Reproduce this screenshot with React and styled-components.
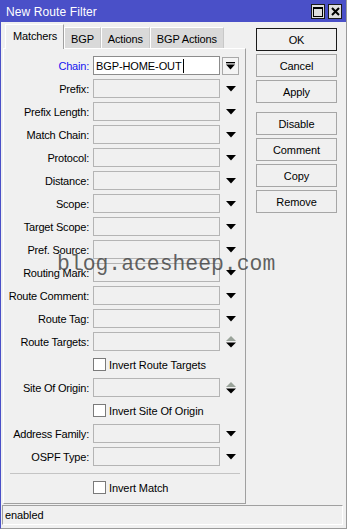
import React from "react";
import styled, { createGlobalStyle } from "styled-components";

const Global = createGlobalStyle`
  html, body { margin: 0; padding: 0; background: #f0f0f0; }
  body { font-family: "Liberation Sans", Arial, sans-serif; font-size: 11px; color: #000; }
  * { box-sizing: border-box; }
`;

const Window = styled.div`
  position: relative;
  width: 347px;
  height: 529px;
  background: #f0f0f0;
  border-left: 1px solid #4a50c8;
  border-right: 1px solid #9a9a9a;
  border-bottom: 1px solid #9a9a9a;
  display: flex;
  flex-direction: column;
  overflow: hidden;
`;

const TitleBar = styled.div`
  height: 22px;
  margin-left: -1px;
  margin-right: -1px;
  background: #4a50c8;
  display: flex;
  align-items: center;
  justify-content: space-between;
  padding: 0 5px 0 6px;
`;

const Title = styled.div`
  color: #fff;
  font-size: 12px;
  letter-spacing: 0.1px;
  padding-top: 1px;
`;

const TitleButtons = styled.div`
  display: flex;
  gap: 3px;
  margin-top: 1px;
`;

const TitleBtn = styled.div`
  width: 14px;
  height: 15px;
  background: #dedede;
  border: 1px solid #1a1a1a;
  display: flex;
  align-items: center;
  justify-content: center;
`;

const Main = styled.div`
  display: flex;
  padding: 2px 0 0 2px;
  height: 482px;
`;

const LeftCol = styled.div`
  width: 243px;
  display: flex;
  flex-direction: column;
`;

const Tabs = styled.div`
  display: flex;
  height: 24px;
  padding-left: 2px;
  position: relative;
  z-index: 2;
`;

const Tab = styled.div`
  height: ${(p) => (p.$active ? "25px" : "21px")};
  margin-top: ${(p) => (p.$active ? "0" : "3px")};
  padding: ${(p) => (p.$active ? "0 6px 2px 7px" : "1px 6px 0")};
  background: ${(p) => (p.$active ? "#f0f0f0" : "#d9d9d9")};
  border-top: 1px solid #fff;
  border-left: 1px solid #fff;
  border-right: 1px solid ${(p) => (p.$active ? "#a0a0a0" : "#c8c8c8")};
  display: flex;
  align-items: center;
  justify-content: center;
  letter-spacing: -0.15px;
`;

const Panel = styled.div`
  height: 456px;
  border-top: 1px solid #fff;
  border-left: 1px solid #fff;
  border-right: 1px solid #a0a0a0;
  border-bottom: 1px solid #a0a0a0;
  padding: 7px 0 0 0;
  display: flex;
  flex-direction: column;
`;

const Form = styled.div`
  display: flex;
  flex-direction: column;
  gap: 4px;
`;

const Row = styled.div`
  display: flex;
  align-items: center;
  height: 19px;
`;

const Label = styled.div`
  width: 86px;
  padding-right: 1px;
  text-align: right;
  white-space: nowrap;
  letter-spacing: -0.2px;
  color: ${(p) => (p.$blue ? "#1515f0" : "#000")};
`;

const Field = styled.div`
  width: 127px;
  height: 19px;
  margin-left: 3px;
  border: 1px solid ${(p) => (p.$active ? "#8c8c8c" : "#b4b4b4")};
  background: ${(p) => (p.$active ? "#fff" : "#f0f0f0")};
  display: flex;
  align-items: center;
  padding-left: 2px;
  letter-spacing: -0.1px;
`;

const Caret = styled.span`
  display: inline-block;
  width: 1px;
  height: 14px;
  background: #000;
  margin-left: 1px;
`;

const ArrowSlot = styled.div`
  width: 17px;
  height: 18px;
  margin-left: 2px;
  display: flex;
  align-items: center;
  justify-content: center;
`;

const DropBtn = styled.div`
  width: 17px;
  height: 18px;
  margin-left: 2px;
  border: 1px solid #a8a8a8;
  background: #f4f4f4;
  display: flex;
  align-items: center;
  justify-content: center;
`;

const CheckBox = styled.div`
  width: 13px;
  height: 13px;
  margin-left: 3px;
  background: #fff;
  border: 1px solid #7a7a7a;
`;

const CheckLabel = styled.div`
  margin-left: 3px;
  letter-spacing: -0.1px;
`;

const Separator = styled.div`
  height: 1px;
  background: #c4c4c4;
  margin: 7px 5px 4px 6px;
`;

const ButtonCol = styled.div`
  margin-left: 10px;
  padding-top: 4px;
  display: flex;
  flex-direction: column;
  width: 81px;
`;

const ButtonGroup = styled.div`
  display: flex;
  flex-direction: column;
  gap: 3px;
  margin-bottom: ${(p) => (p.$spaced ? "9px" : "0")};
`;

const Button = styled.div`
  height: 23px;
  border: 1px solid ${(p) => (p.$default ? "#1a1a1a" : "#a6a6a6")};
  background: #f0f0f0;
  display: flex;
  align-items: center;
  justify-content: center;
  letter-spacing: -0.1px;
`;

const StatusBar = styled.div`
  margin: 1px 3px 0 1px;
  height: 20px;
  border-top: 1px solid #a0a0a0;
  border-left: 1px solid #a0a0a0;
  border-bottom: 1px solid #fff;
  border-right: 1px solid #fff;
  display: flex;
  align-items: center;
  padding-left: 2px;
  letter-spacing: -0.1px;
`;

const Watermark = styled.div`
  position: absolute;
  left: 56px;
  top: 254px;
  font-family: "Liberation Mono", "DejaVu Sans Mono", monospace;
  font-size: 21.4px;
  line-height: 21px;
  color: rgba(70, 70, 70, 0.85);
  pointer-events: none;
  white-space: nowrap;
`;

const Down = () => (
  <svg width="10" height="6" viewBox="0 0 10 6">
    <polygon points="0,0 10,0 5,5.5" fill="#000" />
  </svg>
);

const Spin = () => (
  <svg width="10" height="12" viewBox="0 0 10 12">
    <polygon points="5,0 10,5 0,5" fill="#9aa39a" />
    <polygon points="0,6.5 10,6.5 5,11.5" fill="#000" />
  </svg>
);

const DropIcon = () => (
  <svg width="9" height="8" viewBox="0 0 9 8">
    <rect x="0" y="0" width="9" height="1.3" fill="#000" />
    <polygon points="0,2.5 9,2.5 4.5,7.5" fill="#000" />
  </svg>
);

const fields = [
  ["Prefix", "down"],
  ["Prefix Length", "down"],
  ["Match Chain", "down"],
  ["Protocol", "down"],
  ["Distance", "down"],
  ["Scope", "down"],
  ["Target Scope", "down"],
  ["Pref. Source", "down"],
  ["Routing Mark", "down"],
  ["Route Comment", "down"],
  ["Route Tag", "down"],
  ["Route Targets", "spin"],
  ["Invert Route Targets", "check"],
  ["Site Of Origin", "spin"],
  ["Invert Site Of Origin", "check"],
  ["Address Family", "down"],
  ["OSPF Type", "down"],
];

const CheckRow = ({ label }) => (
  <Row>
    <Label />
    <CheckBox />
    <CheckLabel>{label}</CheckLabel>
  </Row>
);

export default function App() {
  return (
    <>
      <Global />
      <Window>
        <TitleBar>
          <Title>New Route Filter</Title>
          <TitleButtons>
            <TitleBtn>
              <svg width="10" height="10" viewBox="0 0 10 10">
                <rect x="0.5" y="0.5" width="9" height="9" fill="none" stroke="#000" strokeWidth="1" />
                <rect x="0" y="0" width="10" height="2" fill="#000" />
              </svg>
            </TitleBtn>
            <TitleBtn>
              <svg width="9" height="9" viewBox="0 0 9 9">
                <path d="M1 1 L8 8 M8 1 L1 8" stroke="#000" strokeWidth="2" />
              </svg>
            </TitleBtn>
          </TitleButtons>
        </TitleBar>
        <Main>
          <LeftCol>
            <Tabs>
              <Tab $active>Matchers</Tab>
              <Tab>BGP</Tab>
              <Tab>Actions</Tab>
              <Tab>BGP Actions</Tab>
            </Tabs>
            <Panel>
              <Form>
                <Row>
                  <Label $blue>Chain:</Label>
                  <Field $active>
                    BGP-HOME-OUT
                    <Caret />
                  </Field>
                  <DropBtn>
                    <DropIcon />
                  </DropBtn>
                </Row>
                {fields.map(([name, kind]) =>
                  kind === "check" ? (
                    <CheckRow key={name} label={name} />
                  ) : (
                    <Row key={name}>
                      <Label>{name}:</Label>
                      <Field />
                      <ArrowSlot>{kind === "spin" ? <Spin /> : <Down />}</ArrowSlot>
                    </Row>
                  )
                )}
              </Form>
              <Separator />
              <CheckRow label="Invert Match" />
            </Panel>
          </LeftCol>
          <ButtonCol>
            <ButtonGroup $spaced>
              <Button $default>OK</Button>
              <Button>Cancel</Button>
              <Button>Apply</Button>
            </ButtonGroup>
            <ButtonGroup>
              <Button>Disable</Button>
              <Button>Comment</Button>
              <Button>Copy</Button>
              <Button>Remove</Button>
            </ButtonGroup>
          </ButtonCol>
        </Main>
        <StatusBar>enabled</StatusBar>
        <Watermark>blog.acesheep.com</Watermark>
      </Window>
    </>
  );
}
